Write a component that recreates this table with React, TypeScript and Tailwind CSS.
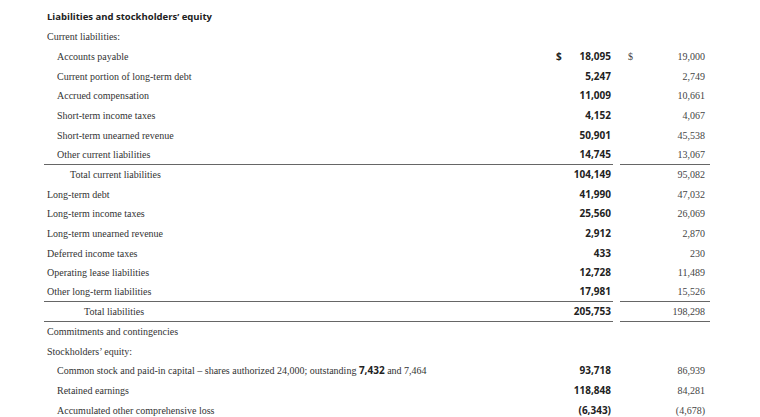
import React from "react";

type Row = {
  label: React.ReactNode;
  indent: number;
  cur?: string;
  prev?: string;
  dollar?: boolean;
  border?: boolean;
};

const rows: Row[] = [
  { label: "Current liabilities:", indent: 0 },
  { label: "Accounts payable", indent: 1, cur: "18,095", prev: "19,000", dollar: true },
  { label: "Current portion of long-term debt", indent: 1, cur: "5,247", prev: "2,749" },
  { label: "Accrued compensation", indent: 1, cur: "11,009", prev: "10,661" },
  { label: "Short-term income taxes", indent: 1, cur: "4,152", prev: "4,067" },
  { label: "Short-term unearned revenue", indent: 1, cur: "50,901", prev: "45,538" },
  { label: "Other current liabilities", indent: 1, cur: "14,745", prev: "13,067", border: true },
  { label: "Total current liabilities", indent: 2, cur: "104,149", prev: "95,082" },
  { label: "Long-term debt", indent: 0, cur: "41,990", prev: "47,032" },
  { label: "Long-term income taxes", indent: 0, cur: "25,560", prev: "26,069" },
  { label: "Long-term unearned revenue", indent: 0, cur: "2,912", prev: "2,870" },
  { label: "Deferred income taxes", indent: 0, cur: "433", prev: "230" },
  { label: "Operating lease liabilities", indent: 0, cur: "12,728", prev: "11,489" },
  { label: "Other long-term liabilities", indent: 0, cur: "17,981", prev: "15,526", border: true },
  { label: "Total liabilities", indent: 3, cur: "205,753", prev: "198,298", border: true },
  { label: "Commitments and contingencies", indent: 0 },
  { label: "Stockholders\u2019 equity:", indent: 0 },
  {
    label: (
      <>
        Common stock and paid-in capital – shares authorized 24,000; outstanding{" "}
        <span className="font-bold text-[10px] text-[#222]" style={{ fontFamily: "'Open Sans', sans-serif" }}>
          7,432
        </span>{" "}
        and 7,464
      </>
    ),
    indent: 1,
    cur: "93,718",
    prev: "86,939",
  },
  { label: "Retained earnings", indent: 1, cur: "118,848", prev: "84,281" },
  { label: "Accumulated other comprehensive loss", indent: 1, cur: "(6,343)", prev: "(4,678)" },
];

const indentClass = ["pl-[3px]", "pl-[13px]", "pl-[26px]", "pl-[40px]"];

export default function App() {
  return (
    <div className="w-[760px] h-[417px] bg-white overflow-hidden">
      <div className="ml-[44px] w-[666px] pt-[7px]">
        <div
          className="h-[20px] flex items-center pl-[3px] text-[9.5px] font-bold text-[#222]"
          style={{ fontFamily: "'Open Sans', sans-serif" }}
        >
          Liabilities and stockholders’ equity
        </div>
        {rows.map((r, i) => (
          <div key={i} className="flex h-[19.67px]">
            <div
              className={`flex-1 flex items-center ${r.border ? "border-b border-[#666]" : ""}`}
            >
              <div
                className={`flex-1 whitespace-nowrap text-[10px] text-[#333] ${indentClass[r.indent]}`}
                style={{ fontFamily: "'Liberation Serif', serif" }}
              >
                {r.label}
              </div>
              <div
                className="w-[70px] flex justify-between pl-[13px] pr-[2px] text-[10px] font-bold text-[#222]"
                style={{ fontFamily: "'Open Sans', sans-serif" }}
              >
                <span>{r.dollar ? "$" : ""}</span>
                <span>{r.cur ?? ""}</span>
              </div>
            </div>
            <div className="w-[7px]" />
            <div
              className={`w-[90px] flex items-center justify-between pl-[8px] pr-[5px] text-[10px] text-[#444] ${
                r.border ? "border-b border-[#666]" : ""
              }`}
              style={{ fontFamily: "'Liberation Serif', serif" }}
            >
              <span>{r.dollar ? "$" : ""}</span>
              <span>{r.prev ?? ""}</span>
            </div>
          </div>
        ))}
      </div>
    </div>
  );
}
